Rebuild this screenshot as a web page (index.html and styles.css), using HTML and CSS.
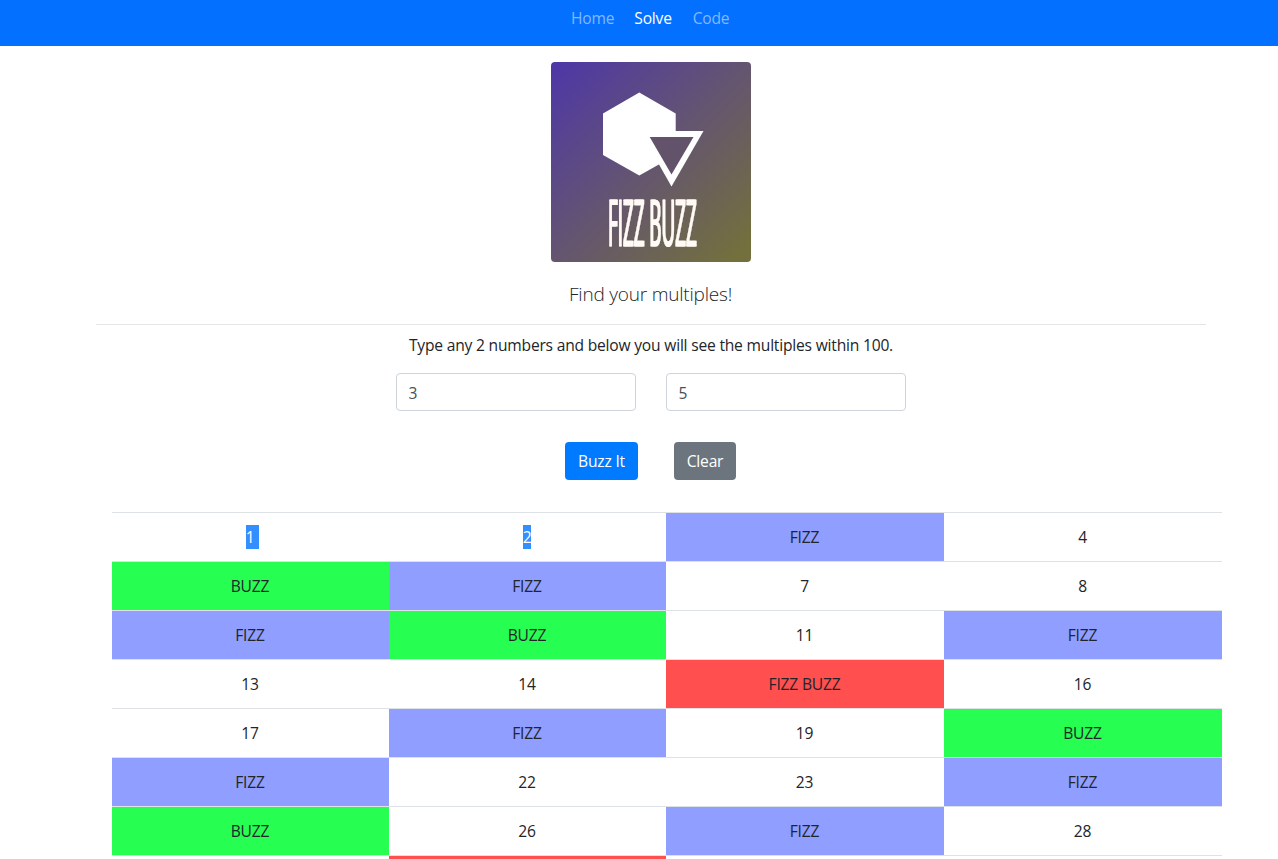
FILE: index.html
```html
<!DOCTYPE html>
<html lang="en">
<head>
<meta charset="utf-8">
<title>Fizz Buzz</title>
<link rel="stylesheet" href="styles.css">
</head>
<body>
<nav class="navbar">
  <a class="nav-link home">Home</a>
  <a class="nav-link active">Solve</a>
  <a class="nav-link code">Code</a>
</nav>
<main class="container">
  <svg class="logo" viewBox="0 0 200 200" role="img" aria-label="Fizz Buzz logo">
    <defs>
      <linearGradient id="bg" x1="0" y1="0" x2="1" y2="1">
        <stop offset="0.03" stop-color="#4f38a5"/>
        <stop offset="0.5" stop-color="#645570"/>
        <stop offset="0.95" stop-color="#73703d"/>
      </linearGradient>
    </defs>
    <rect width="200" height="200" rx="4" fill="url(#bg)"/>
    <path d="M88.3 30.5 124.7 51.5V93L88.3 113.5 52 93V51.5Z" fill="#fff"/>
    <path d="M89 69H152.500L120.500 124.500Z" fill="#fff"/>
    <path d="M98.700 75H142.500L120.500 112.500Z" fill="#62536b"/>
    <g class="logo-word"><text class="logo-text" transform="translate(56.500 184) scale(0.31 1)" x="0" y="0" textLength="286" lengthAdjust="spacingAndGlyphs">FIZZ BUZZ</text></g>
  </svg>
  <h1 class="lead">Find your multiples!</h1>
  <p class="hint"><span>Type any 2 numbers and below you will see the multiples within 100.</span></p>
  <form class="form">
    <div class="inputs">
      <input class="field" type="text" value="3" aria-label="First number">
      <input class="field" type="text" value="5" aria-label="Second number">
    </div>
    <div class="buttons">
      <button class="btn primary" type="button">Buzz It</button>
      <button class="btn secondary" type="button">Clear</button>
    </div>
  </form>
  <div class="grid">
    <div class="cell"><span class="selected wide">1</span></div><div class="cell"><span class="selected">2</span></div><div class="cell fizz">FIZZ</div><div class="cell">4</div>
    <div class="cell buzz">BUZZ</div><div class="cell fizz">FIZZ</div><div class="cell">7</div><div class="cell">8</div>
    <div class="cell fizz">FIZZ</div><div class="cell buzz">BUZZ</div><div class="cell">11</div><div class="cell fizz">FIZZ</div>
    <div class="cell">13</div><div class="cell">14</div><div class="cell fizzbuzz">FIZZ BUZZ</div><div class="cell">16</div>
    <div class="cell">17</div><div class="cell fizz">FIZZ</div><div class="cell">19</div><div class="cell buzz">BUZZ</div>
    <div class="cell fizz">FIZZ</div><div class="cell">22</div><div class="cell">23</div><div class="cell fizz">FIZZ</div>
    <div class="cell buzz">BUZZ</div><div class="cell">26</div><div class="cell fizz">FIZZ</div><div class="cell">28</div>
    <div class="cell last"></div><div class="cell last fizzbuzz"></div><div class="cell last"></div><div class="cell last"></div>
  </div>
</main>
</body>
</html>
```

FILE: styles.css
```css
* { box-sizing: border-box; }

body {
  margin: 0;
  height: 859px;
  overflow: hidden;
  background: #fff;
  color: #212529;
  font-family: "Open Sans", sans-serif;
  font-size: 15.600px;
  letter-spacing: -0.200px;
  line-height: 24px;
}

.navbar {
  display: flex;
  gap: 20px;
  height: 46px;
  padding: 6px 0 0 571px;
  background: #0470ff;
}

.nav-link { color: #82b8ff; white-space: nowrap; }
.nav-link.active { color: #fff; }
.nav-link.code { margin-left: 1px; }

.container {
  display: flex;
  flex-direction: column;
  width: 1110px;
  margin-left: 96px;
  padding-top: 16px;
}

.logo { width: 200px; height: 200px; align-self: center; }

.logo-word { filter: drop-shadow(1.300px 0 0 #fffaf5); }

.logo-text {
  font-family: "Open Sans", sans-serif;
  font-size: 64.500px;
  font-weight: 400;
  letter-spacing: 0;
  fill: #fffaf5;
  stroke: #fffaf5;
  stroke-width: 0.800px;
}

.lead {
  margin: 17px 0 0;
  height: 46px;
  border-bottom: 1px solid #e5e5e5;
  padding-right: 1px;
  font-size: 19px;
  font-weight: 300;
  line-height: 30px;
  text-align: center;
}

.hint { margin: 8px 0 0; text-align: center; }

.form { margin: 16px 0 0; }

.inputs { display: flex; justify-content: center; gap: 30px; }

.field {
  width: 240px;
  height: 38px;
  padding: 8px 12px 6px 11.500px;
  border: 1px solid #ced4da;
  border-radius: 4px;
  color: #495057;
  font: inherit;
}

.buttons { display: flex; justify-content: center; gap: 36px; margin-top: 31px; padding-right: 1px; }

.btn {
  height: 38px;
  padding: 7px 0;
  border: 0;
  border-radius: 4px;
  color: #fff;
  font: inherit;
  letter-spacing: -0.200px;
}

.primary { width: 73px; background: #007bff; }
.secondary { width: 62px; background: #6c757d; }

.grid {
  display: grid;
  grid-template-columns: 277px 277px 278px 278px;
  width: 1110px;
  margin: 32px 0 0 16px;
}

.cell {
  height: 49px;
  padding: 12px 1px 0 0;
  border-top: 1px solid #dee2e6;
  text-align: center;
}

.last { height: 4px; padding: 0; }

.fizz { background: #8f9eff; }
.buzz { background: #26ff52; }
.fizzbuzz { background: #ff4f4f; }

.selected { display: inline-block; height: 24px; background: #338fff; color: #fff; }
.wide { padding-right: 4.500px; margin-left: 4.500px; }
```
